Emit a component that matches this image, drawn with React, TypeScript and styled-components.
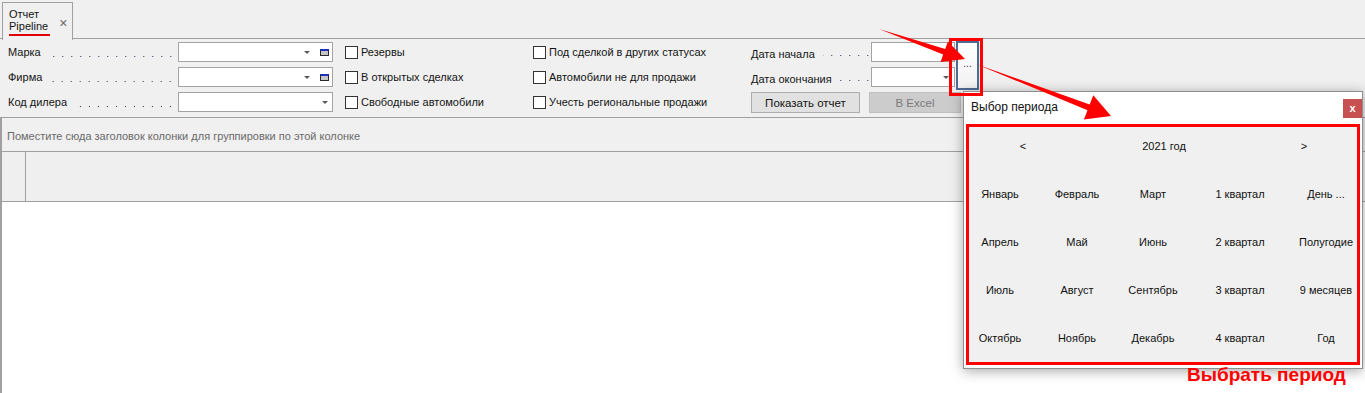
import styled, { createGlobalStyle } from 'styled-components';

const GlobalStyle = createGlobalStyle`
  html, body {
    margin: 0;
    padding: 0;
    background: #f0f0f0;
  }
  body {
    font-family: 'Liberation Sans', Arial, sans-serif;
    font-size: 11px;
    color: #141414;
  }
  * {
    box-sizing: border-box;
  }
`;

const Window = styled.div`
  position: relative;
  width: 1365px;
  height: 393px;
  overflow: hidden;
  display: flex;
  flex-direction: column;
  background: #f0f0f0;
`;

/* ---------- tabs ---------- */

const TabStrip = styled.div`
  flex: none;
  height: 39px;
  padding: 2px 0 0 2px;
  border-bottom: 1px solid #a0a0a0;
  display: flex;
`;

const Tab = styled.div`
  width: 71px;
  height: 38px;
  margin-bottom: -1px;
  border: 1px solid #a0a0a0;
  border-bottom: none;
  background: #f0f0f0;
  display: flex;
  padding: 5px 0 0 6px;
`;

const TabTitle = styled.div`
  display: flex;
  flex-direction: column;
  line-height: 12px;
`;

const TabName = styled.span`
  align-self: flex-start;
  padding-right: 2px;
  padding-bottom: 2px;
  border-bottom: 2px solid #e00000;
`;

const TabClose = styled.span`
  margin: 9px 0 0 9px;
  color: #6a6a6a;
  font-size: 14px;
  line-height: 12px;
`;

/* ---------- filter form ---------- */

const FormPanel = styled.div`
  flex: none;
  height: 79px;
  border-bottom: 1px solid #a0a0a0;
  display: flex;
  padding: 3px 0 0 8px;
`;

const FieldColumn = styled.div`
  width: 325px;
  display: flex;
  flex-direction: column;
  gap: 5px;
`;

const FieldRow = styled.div`
  height: 20px;
  display: flex;
  align-items: center;
`;

const FieldLabel = styled.div<{ $width: number }>`
  width: ${({ $width }) => $width}px;
  height: 100%;
  display: flex;
  align-items: center;
  white-space: nowrap;
`;

const Leader = styled.span<{ $gapRight: number }>`
  flex: 1;
  align-self: stretch;
  margin-left: 8px;
  background-image: linear-gradient(to right, #4e1f60 1px, transparent 1px);
  background-size: 9px 1px;
  background-repeat: repeat-x;
  background-position: right ${({ $gapRight }) => $gapRight}px bottom 5px;
`;

const ComboBox = styled.div<{ $width: number }>`
  width: ${({ $width }) => $width}px;
  height: 20px;
  background: #fff;
  border: 1px solid #a3a3a3;
  display: flex;
  justify-content: flex-end;
  align-items: center;
  gap: 9px;
  padding-right: 3px;
`;

const DropArrow = styled.span`
  width: 0;
  height: 0;
  margin-right: 1px;
  border-left: 3px solid transparent;
  border-right: 3px solid transparent;
  border-top: 3px solid #5a5a5a;
`;

const LookupIcon = styled.span`
  width: 9px;
  height: 7px;
  background: #c4c4c4;
  border: 1px solid #2a2a2a;
  border-top: 2px solid #1c2fbf;
`;

const CheckColumn = styled.div<{ $width: number; $offset: number }>`
  width: ${({ $width }) => $width}px;
  margin-left: ${({ $offset }) => $offset}px;
  display: flex;
  flex-direction: column;
  gap: 5px;
`;

const CheckRow = styled.label`
  height: 20px;
  display: flex;
  align-items: center;
  gap: 3px;
  white-space: nowrap;
`;

const CheckBox = styled.span`
  width: 13px;
  height: 13px;
  flex: none;
  background: #fff;
  border: 1px solid #333;
`;

const DateColumn = styled.div`
  display: flex;
  flex-direction: column;
  gap: 5px;
`;

const DateGrid = styled.div`
  display: grid;
  grid-template-columns: 120px 84px auto;
  grid-template-rows: 20px 20px;
  row-gap: 5px;
`;

const DateLabel = styled.div`
  display: flex;
  align-items: flex-end;
  padding-bottom: 1px;
  white-space: nowrap;
  line-height: 13px;
`;

const DateInput = styled.div`
  background: #fff;
  border: 1px solid #a3a3a3;
  display: flex;
  justify-content: flex-end;
  align-items: center;
  padding-right: 4px;
`;

const EllipsisButton = styled.div`
  grid-column: 3;
  grid-row: 1 / 3;
  align-self: start;
  width: 23px;
  height: 49px;
  margin: -1px 0 0 1px;
  background: linear-gradient(#ffffff, #f2f2f2);
  border: 2px solid #4f6b94;
  display: flex;
  align-items: center;
  justify-content: center;
  font-size: 10px;
  color: #3a2a5a;
  padding-bottom: 4px;
`;

const ButtonRow = styled.div`
  display: flex;
  gap: 9px;
`;

const ActionButton = styled.div<{ $width: number; $disabled?: boolean }>`
  width: ${({ $width }) => $width}px;
  height: 21px;
  display: flex;
  align-items: center;
  justify-content: center;
  background: ${({ $disabled }) => ($disabled ? '#cccccc' : '#e1e1e1')};
  border: 1px solid ${({ $disabled }) => ($disabled ? '#bfbfbf' : '#adadad')};
  color: ${({ $disabled }) => ($disabled ? '#7a7a7a' : '#141414')};
  font-size: 11.5px;
`;

/* ---------- grid ---------- */

const GroupPanel = styled.div`
  flex: none;
  height: 34px;
  padding: 2px 0 0 5px;
  border-left: 2px solid #a0a0a0;
  border-bottom: 1px solid #a0a0a0;
  display: flex;
  align-items: center;
  color: #6a6a6a;
`;

const GridHeader = styled.div`
  flex: none;
  height: 50px;
  display: flex;
  background: #efefef;
  border-left: 2px solid #a0a0a0;
  border-bottom: 1px solid #a0a0a0;
`;

const RowSelectorCell = styled.div`
  width: 24px;
  border-right: 1px solid #a0a0a0;
`;

const GridBody = styled.div`
  flex: 1;
  background: #fff;
  border-left: 2px solid #a0a0a0;
`;

/* ---------- period popup ---------- */

const PeriodPopup = styled.div`
  position: absolute;
  left: 963px;
  top: 91px;
  width: 400px;
  height: 278px;
  background: #fff;
  border: 1px solid #8f8f8f;
  box-shadow: 0 2px 12px rgba(0, 0, 0, 0.35);
  display: flex;
  flex-direction: column;
`;

const PopupTitleBar = styled.div`
  height: 32px;
  flex: none;
  display: flex;
  justify-content: space-between;
  align-items: flex-start;
  padding-left: 7px;
`;

const PopupTitle = styled.span`
  margin-top: 8px;
  font-size: 12px;
  line-height: 14px;
  color: #111;
`;

const PopupClose = styled.span`
  width: 19px;
  height: 19px;
  margin-top: 7px;
  background: #c75050;
  color: #fff;
  font-weight: bold;
  font-size: 11px;
  display: flex;
  align-items: center;
  justify-content: center;
  padding-bottom: 2px;
`;

const PeriodFrame = styled.div`
  flex: 1;
  margin: 0 2px 4px 2px;
  border: 3px solid #ff0000;
  background: #f0f0f0;
  display: flex;
  flex-direction: column;
`;

const YearRow = styled.div`
  height: 38px;
  flex: none;
  display: grid;
  grid-template-columns: 108px 1fr 106px;
  align-items: center;
  justify-items: center;
  color: #111;
`;

const MonthGrid = styled.div`
  margin-top: 5px;
  display: grid;
  grid-template-columns: 62px 92px 60px 114px 58px;
  grid-auto-rows: 48px;
`;

const PeriodCell = styled.div`
  display: flex;
  align-items: center;
  justify-content: center;
  white-space: nowrap;
  color: #111;
`;

/* ---------- annotations ---------- */

const AnnotationLayer = styled.svg`
  position: absolute;
  left: 0;
  top: 0;
  width: 1365px;
  height: 393px;
  pointer-events: none;
`;

const Caption = styled.div`
  position: absolute;
  left: 1187px;
  top: 364px;
  font-size: 19px;
  font-weight: bold;
  line-height: 22px;
  color: #ff0000;
  white-space: nowrap;
`;

const arrowPoints = (
  x1: number,
  y1: number,
  x2: number,
  y2: number,
  shaft: number,
  headLen: number,
  headW: number
) => {
  const dx = x2 - x1;
  const dy = y2 - y1;
  const len = Math.hypot(dx, dy);
  const ux = dx / len;
  const uy = dy / len;
  const px = -uy;
  const py = ux;
  const bx = x2 - ux * headLen;
  const by = y2 - uy * headLen;
  return [
    [x1, y1],
    [bx + (px * shaft) / 2, by + (py * shaft) / 2],
    [bx + (px * headW) / 2, by + (py * headW) / 2],
    [x2, y2],
    [bx - (px * headW) / 2, by - (py * headW) / 2],
    [bx - (px * shaft) / 2, by - (py * shaft) / 2],
  ]
    .map((p) => p.map((v) => v.toFixed(1)).join(','))
    .join(' ');
};

const periodRows = [
  ['Январь', 'Февраль', 'Март', '1 квартал', 'День ...'],
  ['Апрель', 'Май', 'Июнь', '2 квартал', 'Полугодие'],
  ['Июль', 'Август', 'Сентябрь', '3 квартал', '9 месяцев'],
  ['Октябрь', 'Ноябрь', 'Декабрь', '4 квартал', 'Год'],
];

export default function App() {
  return (
    <>
      <GlobalStyle />
      <Window>
        <TabStrip>
          <Tab>
            <TabTitle>
              <span>Отчет</span>
              <TabName>Pipeline</TabName>
            </TabTitle>
            <TabClose>×</TabClose>
          </Tab>
        </TabStrip>

        <FormPanel>
          <FieldColumn>
            <FieldRow>
              <FieldLabel $width={170}>
                Марка<Leader $gapRight={8} />
              </FieldLabel>
              <ComboBox $width={155}>
                <DropArrow />
                <LookupIcon />
              </ComboBox>
            </FieldRow>
            <FieldRow>
              <FieldLabel $width={170}>
                Фирма<Leader $gapRight={8} />
              </FieldLabel>
              <ComboBox $width={155}>
                <DropArrow />
                <LookupIcon />
              </ComboBox>
            </FieldRow>
            <FieldRow>
              <FieldLabel $width={170}>
                Код дилера<Leader $gapRight={8} />
              </FieldLabel>
              <ComboBox $width={155}>
                <DropArrow />
              </ComboBox>
            </FieldRow>
          </FieldColumn>

          <CheckColumn $width={188} $offset={12}>
            <CheckRow>
              <CheckBox />
              Резервы
            </CheckRow>
            <CheckRow>
              <CheckBox />В открытых сделках
            </CheckRow>
            <CheckRow>
              <CheckBox />
              Свободные автомобили
            </CheckRow>
          </CheckColumn>

          <CheckColumn $width={218} $offset={0}>
            <CheckRow>
              <CheckBox />
              Под сделкой в других статусах
            </CheckRow>
            <CheckRow>
              <CheckBox />
              Автомобили не для продажи
            </CheckRow>
            <CheckRow>
              <CheckBox />
              Учесть региональные продажи
            </CheckRow>
          </CheckColumn>

          <DateColumn>
            <DateGrid>
              <DateLabel>
                Дата начала<Leader $gapRight={4} />
              </DateLabel>
              <DateInput />
              <EllipsisButton>...</EllipsisButton>
              <DateLabel>
                Дата окончания<Leader $gapRight={4} />
              </DateLabel>
              <DateInput>
                <DropArrow />
              </DateInput>
            </DateGrid>
            <ButtonRow>
              <ActionButton $width={109}>Показать отчет</ActionButton>
              <ActionButton $width={92} $disabled>
                В Excel
              </ActionButton>
            </ButtonRow>
          </DateColumn>
        </FormPanel>

        <GroupPanel>Поместите сюда заголовок колонки для группировки по этой колонке</GroupPanel>
        <GridHeader>
          <RowSelectorCell />
        </GridHeader>
        <GridBody />

        <PeriodPopup>
          <PopupTitleBar>
            <PopupTitle>Выбор периода</PopupTitle>
            <PopupClose>x</PopupClose>
          </PopupTitleBar>
          <PeriodFrame>
            <YearRow>
              <span>&lt;</span>
              <span>2021 год</span>
              <span>&gt;</span>
            </YearRow>
            <MonthGrid>
              {periodRows.flat().map((label) => (
                <PeriodCell key={label}>{label}</PeriodCell>
              ))}
            </MonthGrid>
          </PeriodFrame>
        </PeriodPopup>

        <AnnotationLayer viewBox="0 0 1365 393">
          <rect x={950.5} y={39.5} width={31} height={55} fill="none" stroke="#ff0000" strokeWidth={3} />
          <polygon points={arrowPoints(879, 29, 965, 59, 6, 22, 22)} fill="#ff0000" />
          <polygon points={arrowPoints(976, 64, 1111, 116, 6, 24, 26)} fill="#ff0000" />
        </AnnotationLayer>
        <Caption>Выбрать период</Caption>
      </Window>
    </>
  );
}
